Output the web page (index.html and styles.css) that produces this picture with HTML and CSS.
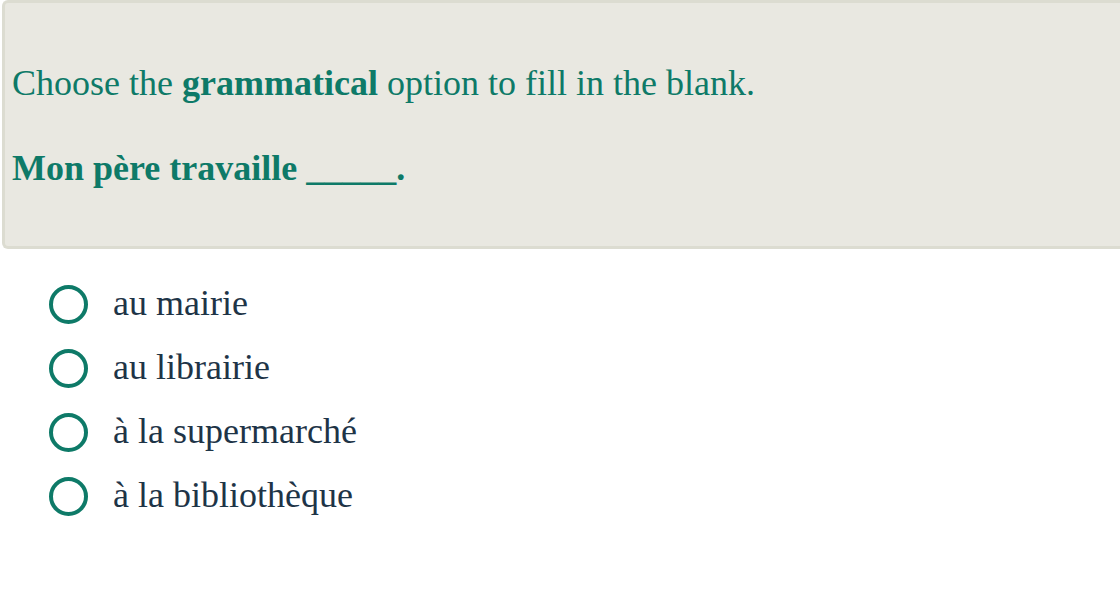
FILE: index.html
```html
<!DOCTYPE html>
<html>
<head>
<meta charset="utf-8">
<link rel="stylesheet" href="styles.css">
</head>
<body>
<div class="prompt">
  <p class="instr">Choose the <b>grammatical</b> option to fill in the blank.</p>
  <p class="sentence">Mon père travaille _____.</p>
</div>
<ul class="options">
  <li class="opt"><span class="radio"></span><span class="label">au mairie</span></li>
  <li class="opt"><span class="radio"></span><span class="label">au librairie</span></li>
  <li class="opt"><span class="radio"></span><span class="label">à la supermarché</span></li>
  <li class="opt"><span class="radio"></span><span class="label">à la bibliothèque</span></li>
</ul>
</body>
</html>
```
FILE: styles.css
```css
html, body { margin: 0; padding: 0; background: #fff; }
body {
  font-family: "Liberation Serif", "Times New Roman", serif;
  padding: 0 0 0 2px;
}
.prompt {
  background: #e9e8e1;
  border: 3px solid #dcdcd1;
  border-right: none;
  border-radius: 6px 0 0 6px;
  height: 243px;
  padding: 0 0 0 7px;
  box-sizing: content-box;
  color: #0e7a68;
  font-size: 36px;
}
.instr { margin: 0; padding-top: 60px; line-height: 40px; }
.sentence { margin: 0; padding-top: 45px; line-height: 40px; font-weight: bold; }
.options { list-style: none; margin: 0; padding: 23px 0 0 47px; }
.opt { display: flex; align-items: center; height: 64px; }
.radio {
  width: 31px; height: 31px;
  border: 4px solid #0e7a68;
  border-radius: 50%;
  flex: none;
}
.label {
  margin: 0 0 2px 25px;
  font-size: 36px;
  color: #1e3447;
}
```
